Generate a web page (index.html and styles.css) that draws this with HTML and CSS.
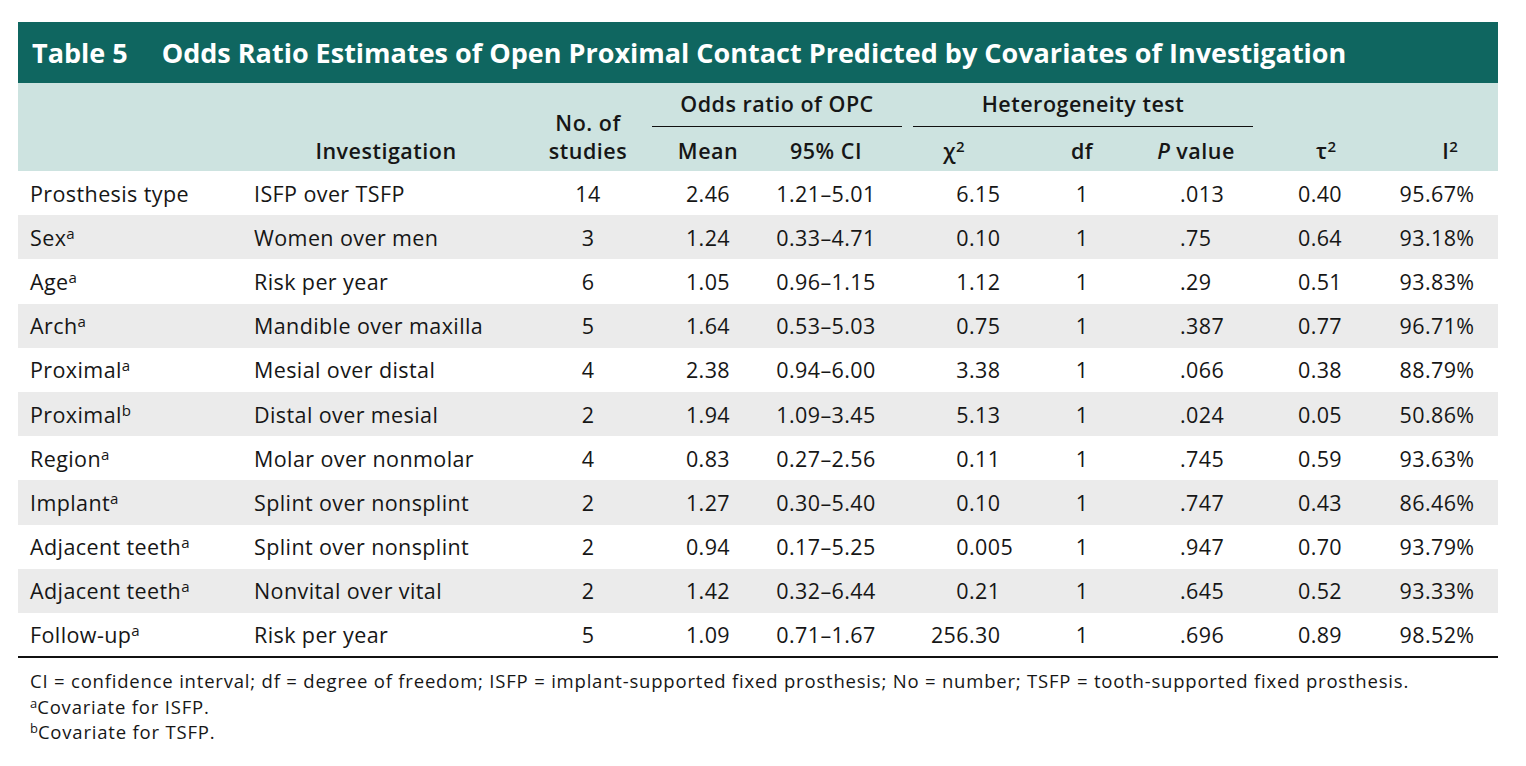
FILE: index.html
```html
<!DOCTYPE html>
<html lang="en">
<head>
<meta charset="utf-8">
<title>Table 5</title>
<link rel="stylesheet" href="styles.css">
</head>
<body>
<div class="page">
  <div class="caption"><span class="label">Table 5</span><span class="title">Odds Ratio Estimates of Open Proximal Contact Predicted by Covariates of Investigation</span></div>
  <table class="data">
    <colgroup>
      <col class="c-cov"><col class="c-inv"><col class="c-n"><col class="c-mean"><col class="c-ci"><col class="c-chi"><col class="c-df"><col class="c-p"><col class="c-tau"><col class="c-i2">
    </colgroup>
    <thead>
      <tr class="hrow1">
        <th rowspan="2"></th>
        <th rowspan="2" class="h-inv">Investigation</th>
        <th rowspan="2" class="h-n">No. of<br>studies</th>
        <th colspan="2" class="group g-odds"><span>Odds ratio of OPC</span></th>
        <th colspan="3" class="group g-het"><span>Heterogeneity test</span></th>
        <th rowspan="2" class="h-tau">τ<sup>2</sup></th>
        <th rowspan="2" class="h-i2">I<sup>2</sup></th>
      </tr>
      <tr class="hrow2">
        <th>Mean</th>
        <th class="h-ci">95% CI</th>
        <th class="h-chi">χ<sup>2</sup></th>
        <th>df</th>
        <th class="h-p"><i>P</i> value</th>
      </tr>
    </thead>
    <tbody>
      <tr><td class="cov">Prosthesis type</td><td class="inv">ISFP over TSFP</td><td>14</td><td>2.46</td><td class="ci">1.21–5.01</td><td class="chi"><span class="int">6</span>.15</td><td>1</td><td class="p">.013</td><td class="tau">0.40</td><td class="i2">95.67%</td></tr>
      <tr><td class="cov">Sex<sup>a</sup></td><td class="inv">Women over men</td><td>3</td><td>1.24</td><td class="ci">0.33–4.71</td><td class="chi"><span class="int">0</span>.10</td><td>1</td><td class="p">.75</td><td class="tau">0.64</td><td class="i2">93.18%</td></tr>
      <tr><td class="cov">Age<sup>a</sup></td><td class="inv">Risk per year</td><td>6</td><td>1.05</td><td class="ci">0.96–1.15</td><td class="chi"><span class="int">1</span>.12</td><td>1</td><td class="p">.29</td><td class="tau">0.51</td><td class="i2">93.83%</td></tr>
      <tr><td class="cov">Arch<sup>a</sup></td><td class="inv">Mandible over maxilla</td><td>5</td><td>1.64</td><td class="ci">0.53–5.03</td><td class="chi"><span class="int">0</span>.75</td><td>1</td><td class="p">.387</td><td class="tau">0.77</td><td class="i2">96.71%</td></tr>
      <tr><td class="cov">Proximal<sup>a</sup></td><td class="inv">Mesial over distal</td><td>4</td><td>2.38</td><td class="ci">0.94–6.00</td><td class="chi"><span class="int">3</span>.38</td><td>1</td><td class="p">.066</td><td class="tau">0.38</td><td class="i2">88.79%</td></tr>
      <tr><td class="cov">Proximal<sup>b</sup></td><td class="inv">Distal over mesial</td><td>2</td><td>1.94</td><td class="ci">1.09–3.45</td><td class="chi"><span class="int">5</span>.13</td><td>1</td><td class="p">.024</td><td class="tau">0.05</td><td class="i2">50.86%</td></tr>
      <tr><td class="cov">Region<sup>a</sup></td><td class="inv">Molar over nonmolar</td><td>4</td><td>0.83</td><td class="ci">0.27–2.56</td><td class="chi"><span class="int">0</span>.11</td><td>1</td><td class="p">.745</td><td class="tau">0.59</td><td class="i2">93.63%</td></tr>
      <tr><td class="cov">Implant<sup>a</sup></td><td class="inv">Splint over nonsplint</td><td>2</td><td>1.27</td><td class="ci">0.30–5.40</td><td class="chi"><span class="int">0</span>.10</td><td>1</td><td class="p">.747</td><td class="tau">0.43</td><td class="i2">86.46%</td></tr>
      <tr><td class="cov">Adjacent teeth<sup>a</sup></td><td class="inv">Splint over nonsplint</td><td>2</td><td>0.94</td><td class="ci">0.17–5.25</td><td class="chi"><span class="int">0</span>.005</td><td>1</td><td class="p">.947</td><td class="tau">0.70</td><td class="i2">93.79%</td></tr>
      <tr><td class="cov">Adjacent teeth<sup>a</sup></td><td class="inv">Nonvital over vital</td><td>2</td><td>1.42</td><td class="ci">0.32–6.44</td><td class="chi"><span class="int">0</span>.21</td><td>1</td><td class="p">.645</td><td class="tau">0.52</td><td class="i2">93.33%</td></tr>
      <tr><td class="cov">Follow-up<sup>a</sup></td><td class="inv">Risk per year</td><td>5</td><td>1.09</td><td class="ci">0.71–1.67</td><td class="chi"><span class="int">256</span>.30</td><td>1</td><td class="p">.696</td><td class="tau">0.89</td><td class="i2">98.52%</td></tr>
    </tbody>
  </table>
  <div class="notes">
    <p>CI = confidence interval; df = degree of freedom; ISFP = implant-supported fixed prosthesis; No = number; TSFP = tooth-supported fixed prosthesis.</p>
    <p><sup>a</sup>Covariate for ISFP.</p>
    <p><sup>b</sup>Covariate for TSFP.</p>
  </div>
</div>
</body>
</html>
```

FILE: styles.css
```css
html, body {
  margin: 0;
  padding: 0;
  background: #ffffff;
}

body {
  font-family: "Open Sans", "Noto Sans", "Liberation Sans", sans-serif;
  color: #161616;
}

.page {
  width: 1480px;
  padding: 22px 0 0 18px;
}

.caption {
  height: 61px;
  background: #0f6660;
  color: #ffffff;
  display: flex;
  align-items: center;
  padding-left: 14px;
  font-weight: 700;
  font-size: 27px;
  letter-spacing: 0;
  white-space: nowrap;
}

.caption .label {
  margin-right: 34px;
}

.data {
  width: 1480px;
  border-collapse: collapse;
  table-layout: fixed;
  font-size: 21.5px;
  letter-spacing: 0.4px;
}

.c-cov { width: 224px; }
.c-inv { width: 288px; }
.c-n { width: 116px; }
.c-mean { width: 124px; }
.c-ci { width: 138px; }
.c-chi { width: 112px; }
.c-df { width: 124px; }
.c-p { width: 114px; }
.c-tau { width: 124px; }
.c-i2 { width: 116px; }

thead {
  background: #cde3e0;
}

thead th {
  font-weight: 600;
  padding: 0;
  text-align: center;
  line-height: 28px;
  letter-spacing: 0.5px;
}

.hrow1 { height: 44px; }
.hrow2 { height: 44px; }

.hrow1 th {
  vertical-align: bottom;
}

.hrow1 .h-inv,
.hrow1 .h-n,
.hrow1 .h-tau,
.hrow1 .h-i2 {
  padding-bottom: 6px;
}

.hrow1 .h-tau { padding-left: 12px; }
.hrow1 .h-i2 { padding-left: 20px; }

.group span {
  display: block;
  border-bottom: 1.5px solid #111;
  padding-bottom: 8px;
}

.g-odds span { margin: 0 6px; }
.g-het span { margin: 0 5px; }

.hrow2 th {
  vertical-align: middle;
  padding-top: 4px;
}

.hrow2 .h-ci { padding-right: 26px; }
.hrow2 .h-chi { padding-right: 20px; }
.hrow2 .h-p { padding-right: 10px; }

thead sup,
td sup,
.notes sup {
  font-size: 0.7em;
  line-height: 0;
  vertical-align: 0.48em;
  letter-spacing: 0;
}

tbody tr {
  height: 44.2px;
}

tbody tr:nth-child(even) {
  background: #ebebeb;
}

tbody tr:last-child td {
  border-bottom: 2px solid #111;
}

td {
  padding: 0;
  text-align: center;
  vertical-align: middle;
  white-space: nowrap;
}

td.cov,
td.inv {
  text-align: left;
  padding-left: 12px;
}

td.ci { padding-right: 26px; }

td.chi {
  text-align: left;
  padding-left: 16px;
}

td.chi .int {
  display: inline-block;
  width: 45px;
  text-align: right;
}

td.p {
  text-align: left;
  padding-left: 36px;
}

td.i2 { padding-right: 6px; }

.notes {
  padding: 10px 0 0 12px;
  font-size: 18.5px;
  letter-spacing: 0.8px;
  line-height: 25.5px;
}

.notes p {
  margin: 0;
}
```
